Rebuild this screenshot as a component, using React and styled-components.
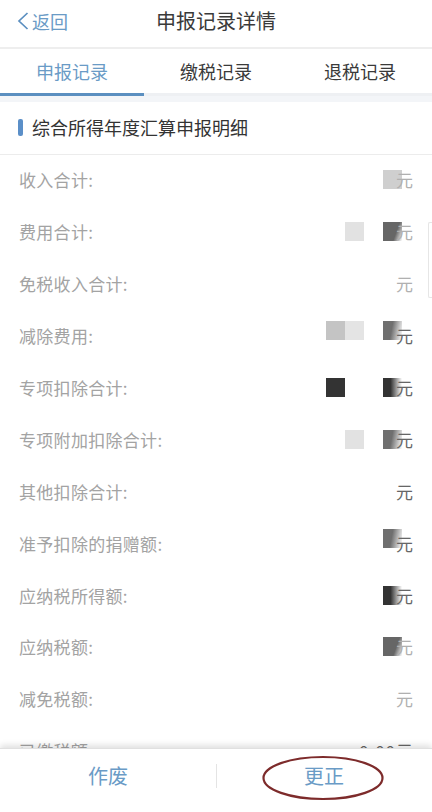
import React from "react";
import styled, {createGlobalStyle} from "styled-components";

const rows = [
  {label: "收入合计:", cells: [null, null, null, "#cfcfcf"], faint: true},
  {label: "费用合计:", cells: [null, "#e2e2e2", null, "dark"], faint: true},
  {label: "免税收入合计:", cells: [null, null, null, null], faint: true},
  {label: "减除费用:", cells: ["#c4c4c4", "#e4e4e4", null, "mid"], raised: true},
  {label: "专项扣除合计:", cells: ["#333333", null, null, "black"]},
  {label: "专项附加扣除合计:", cells: [null, "#e2e2e2", null, "mid"]},
  {label: "其他扣除合计:", cells: [null, null, null, null]},
  {label: "准予扣除的捐赠额:", cells: [null, null, null, "mid"], raised: true},
  {label: "应纳税所得额:", cells: [null, null, null, "black"]},
  {label: "应纳税额:", cells: [null, null, null, "dark"], faint: true},
  {label: "减免税额:", cells: [null, null, null, null], faint: true},
  {label: "已缴税额:", amount: "0.00"},
];

const fades = {
  mid: "linear-gradient(100deg, #6f6f6f 45%, #ffffff00 100%)",
  dark: "linear-gradient(110deg, #666666 65%, #ffffff00 100%)",
  black: "linear-gradient(90deg, #333333 40%, #ffffff00 100%)",
};

const App = () => {
  return (
    <Page>
      <GlobalStyle/>
      <NavBar>
        <BackLink>
          <svg width="12" height="20" viewBox="0 0 12 20" fill="none">
            <path d="M10.5 2 L2 10 L10.5 18" stroke="#5b8fc0" strokeWidth="1.7"/>
          </svg>
          <span>返回</span>
        </BackLink>
        <NavTitle>申报记录详情</NavTitle>
      </NavBar>
      <Tabs>
        <Tab $active>申报记录</Tab>
        <Tab>缴税记录</Tab>
        <Tab>退税记录</Tab>
      </Tabs>
      <Section>
        <Marker/>
        <SectionTitle>综合所得年度汇算申报明细</SectionTitle>
      </Section>
      <List>
        {rows.map((row) => (
          <Row key={row.label}>
            <Label>{row.label}</Label>
            <Value>
              {row.amount && <Amount>{row.amount}</Amount>}
              {row.cells && row.cells.map((cell, i) => (
                <Cell key={i} $fill={fades[cell] || cell} $raised={row.raised}/>
              ))}
              <Unit $faint={row.faint} $plain={!!row.amount}>元</Unit>
            </Value>
          </Row>
        ))}
      </List>
      <Footer>
        <FooterButton>作废</FooterButton>
        <FooterButton $divided>
          更正
          <Circled width="124" height="48" viewBox="0 0 124 48" fill="none">
            <ellipse cx="62" cy="24" rx="59.5" ry="21" stroke="#7d2b2b" strokeWidth="2.2"/>
          </Circled>
        </FooterButton>
      </Footer>
      <ScrollThumb/>
    </Page>
  )
}

const GlobalStyle = createGlobalStyle`
  html, body {
    margin: 0;
    padding: 0;
    background: #fff;
  }
  body {
    font-family: "Noto Sans CJK SC", "Noto Sans", sans-serif;
    font-weight: 400;
  }
`

const Page = styled.div`
  position: relative;
  display: flex;
  flex-direction: column;
  width: 432px;
  height: 812px;
  overflow: hidden;
  background: #fff;
`

const NavBar = styled.div`
  position: relative;
  display: flex;
  align-items: center;
  justify-content: center;
  height: 40px;
  padding-bottom: 7px;
  flex-shrink: 0;
  border-bottom: 2px solid #eeeeee;
`

const BackLink = styled.div`
  position: absolute;
  left: 17px;
  top: 10px;
  display: flex;
  align-items: center;
  gap: 3px;
  height: 22px;
  font-size: 18px;
  color: #6a9bc6;
`

const NavTitle = styled.div`
  font-size: 20px;
  color: #3a3a3a;
`

const Tabs = styled.div`
  display: flex;
  height: 47px;
  flex-shrink: 0;
  border-bottom: 6px solid #f3f5f8;
`

const Tab = styled.div`
  flex: 1;
  display: flex;
  align-items: center;
  justify-content: center;
  font-size: 18px;
  color: ${(props) => (props.$active ? "#6a9bc6" : "#3a3a3a")};
  border-bottom: 3px solid ${(props) => (props.$active ? "#5b8fc0" : "#eef0f3")};
`

const Section = styled.div`
  display: flex;
  align-items: center;
  gap: 9px;
  height: 50px;
  padding: 0 0 2px 18px;
  flex-shrink: 0;
  border-bottom: 1px solid #ececec;
`

const Marker = styled.div`
  width: 5px;
  height: 17px;
  border-radius: 2px;
  background: #5b8fc8;
`

const SectionTitle = styled.div`
  font-size: 18px;
  color: #333;
`

const List = styled.div`
  flex: 1;
  min-height: 0;
  overflow: hidden;
`

const Row = styled.div`
  display: flex;
  align-items: center;
  justify-content: space-between;
  box-sizing: border-box;
  height: 51.9px;
  padding: 0 19px 2px;
`

const Label = styled.div`
  font-size: 17px;
  color: #a3a3a3;
  letter-spacing: 0.3px;
`

const Value = styled.div`
  display: flex;
  align-items: center;
  color: #555;
`

const Cell = styled.div`
  width: 19px;
  height: 19px;
  margin-bottom: ${(props) => (props.$raised ? "10px" : "0")};
  background: ${(props) => props.$fill || "transparent"};
`

const Unit = styled.div`
  margin-left: ${(props) => (props.$plain ? "0" : "-6px")};
  font-size: 17px;
  color: ${(props) => (props.$faint ? "#b0b0b0" : "#666")};
`

const Amount = styled.div`
  font-size: 17px;
  letter-spacing: 1px;
  color: #666;
`

const Footer = styled.div`
  display: flex;
  height: 63px;
  flex-shrink: 0;
  background: #fff;
  border-top: 1px solid #e0e0e0;
  box-shadow: 0 -3px 6px rgba(0, 0, 0, 0.12);
  z-index: 1;
`

const FooterButton = styled.div`
  position: relative;
  flex: 1;
  display: flex;
  align-items: center;
  justify-content: center;
  padding-bottom: 10px;
  font-size: 20px;
  color: #6a9bc6;
  &::before {
    content: "";
    display: ${(props) => (props.$divided ? "block" : "none")};
    position: absolute;
    left: 0;
    top: 15px;
    height: 24px;
    width: 1px;
    background: #e4e4e4;
  }
`

const Circled = styled.svg`
  position: absolute;
  left: 45px;
  top: 5px;
`

const ScrollThumb = styled.div`
  position: absolute;
  right: 0;
  top: 222px;
  width: 3px;
  height: 74px;
  border: 1px solid #e6e6e6;
  border-right: none;
  border-radius: 2px 0 0 2px;
`

export default App
